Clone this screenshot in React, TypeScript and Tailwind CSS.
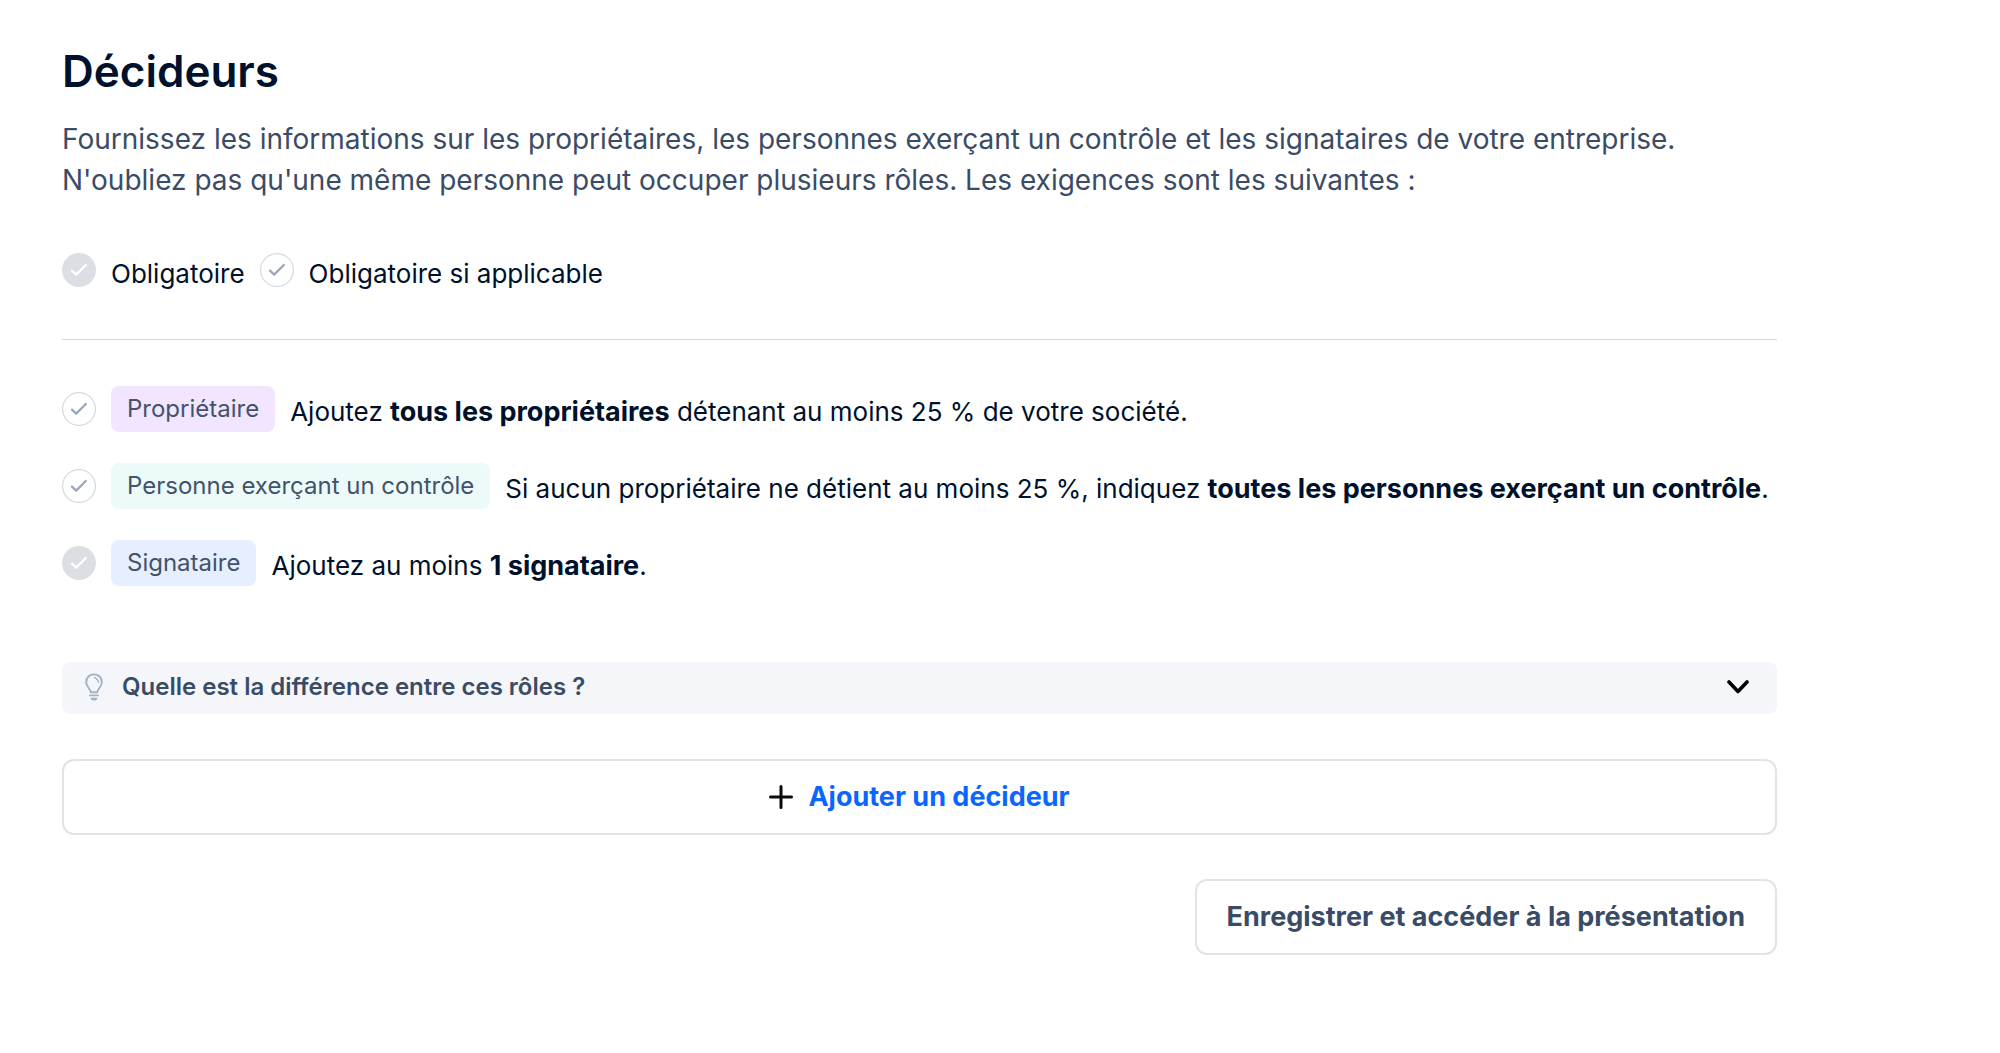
import type { ReactNode } from 'react'

function CheckMark({ filled = false }: { filled?: boolean }) {
  return (
    <svg viewBox="0 0 34 34" className="size-[34px] shrink-0" fill="none" aria-hidden="true">
      {filled ? (
        <circle cx="17" cy="17" r="17" fill="#dbdee3" />
      ) : (
        <circle cx="17" cy="17" r="16.4" stroke="#d8dbe2" strokeWidth="1.3" />
      )}
      <path
        d="M10 17.6 L14.2 21.6 L23.8 12"
        stroke={filled ? '#ffffff' : '#9ba8b8'}
        strokeWidth="2.3"
        strokeLinecap="round"
        strokeLinejoin="round"
      />
    </svg>
  )
}

function Bulb() {
  return (
    <svg viewBox="0 0 18 28" className="h-7 w-[18px] shrink-0" fill="none" stroke="#a3b1c2" aria-hidden="true">
      <path
        d="M5.8 19.2 C5.4 15.8 1.2 14 1.2 9.2 C1.2 4.4 4.6 1.4 9 1.4 C13.4 1.4 16.8 4.4 16.8 9.2 C16.8 14 12.6 15.8 12.2 19.2 Z"
        strokeWidth="1.9"
        strokeLinejoin="round"
      />
      <path d="M9 4.6 C11.8 4.8 13.4 6.6 13.6 9.6 C12.8 7 11.4 5.6 9 4.6 Z" fill="#a3b1c2" strokeWidth="1" strokeLinejoin="round" />
      <path d="M5 22.4 H13" strokeWidth="1.8" strokeLinecap="round" />
      <path d="M6 25.2 H12 L11 26.9 H7 Z" fill="#a3b1c2" strokeWidth="1" strokeLinejoin="round" />
    </svg>
  )
}

function Role({
  name,
  tint,
  filled,
  children,
}: {
  name: string
  tint: string
  filled?: boolean
  children: ReactNode
}) {
  return (
    <li className="flex items-center gap-[15px]">
      <CheckMark filled={filled} />
      <span className={`shrink-0 rounded-lg px-4 text-[24px] leading-[46px] text-[#43536b] ${tint}`}>{name}</span>
      <p className="pt-1.5 text-[26px] leading-8">{children}</p>
    </li>
  )
}

export default function App() {
  return (
    <main className="min-h-screen bg-white px-[62px] py-[42px] font-['Inter',sans-serif] text-[#00112c]">
      <div className="flex max-w-[1715px] flex-col">
        <h1 className="text-[44px] leading-[58px] font-semibold">Décideurs</h1>
        <p className="mt-[19px] text-[28px] leading-[41px] text-[#3a4b66]">
          Fournissez les informations sur les propriétaires, les personnes exerçant un contrôle et les signataires de
          votre entreprise.
          <br />
          N'oubliez pas qu'une même personne peut occuper plusieurs rôles. Les exigences sont les suivantes :
        </p>

        <div className="mt-[52px] flex flex-wrap gap-[15px] border-b border-[#d5d9dd] pb-12">
          <span className="flex items-start gap-[15px] text-[26px] leading-[34px]">
            <CheckMark filled />
            <span className="pt-1">Obligatoire</span>
          </span>
          <span className="flex items-start gap-[15px] text-[26px] leading-[34px]">
            <CheckMark />
            <span className="pt-1">Obligatoire si applicable</span>
          </span>
        </div>

        <ul className="mt-[46px] flex flex-col gap-[31px]">
          <Role name="Propriétaire" tint="bg-[#f2e5ff]">
            Ajoutez <strong className="text-[27px] font-bold">tous les propriétaires</strong> détenant au moins 25 % de
            votre société.
          </Role>
          <Role name="Personne exerçant un contrôle" tint="bg-[#edfafa]">
            Si aucun propriétaire ne détient au moins 25 %, indiquez{' '}
            <strong className="text-[27px] font-bold">toutes les personnes exerçant un contrôle</strong>.
          </Role>
          <Role name="Signataire" tint="bg-[#e5efff]" filled>
            Ajoutez au moins <strong className="text-[27px] font-bold">1 signataire</strong>.
          </Role>
        </ul>

        <button
          type="button"
          aria-expanded="false"
          className="mt-[76px] flex h-[52px] items-center rounded-lg bg-[#f4f6fa] pr-7 pb-0.5 pl-[23px] text-left"
        >
          <Bulb />
          <span className="ml-[19px] grow text-[24px] leading-8 font-semibold text-[#3a4b66]">
            Quelle est la différence entre ces rôles ?
          </span>
          <svg viewBox="0 0 22 14" className="h-3.5 w-[22px] shrink-0" fill="none" aria-hidden="true">
            <path d="M2 2 L11 11.4 L20 2" stroke="#000" strokeWidth="3.6" strokeLinecap="round" strokeLinejoin="round" />
          </svg>
        </button>

        <button
          type="button"
          className="mt-[45px] flex h-[76px] items-center justify-center gap-[15px] rounded-xl border-2 border-[#e0e3e8] text-[27px] font-bold text-[#0a66ff]"
        >
          <svg viewBox="0 0 24 24" className="size-6" fill="none" aria-hidden="true">
            <path d="M12 1.5 V22.5 M1.5 12 H22.5" stroke="#0b0b0d" strokeWidth="3" strokeLinecap="round" />
          </svg>
          Ajouter un décideur
        </button>

        <button
          type="button"
          className="mt-11 h-[76px] self-end rounded-xl border-2 border-[#e0e3e8] px-[30px] text-[27px] font-bold text-[#3a4b66]"
        >
          Enregistrer et accéder à la présentation
        </button>
      </div>
    </main>
  )
}
